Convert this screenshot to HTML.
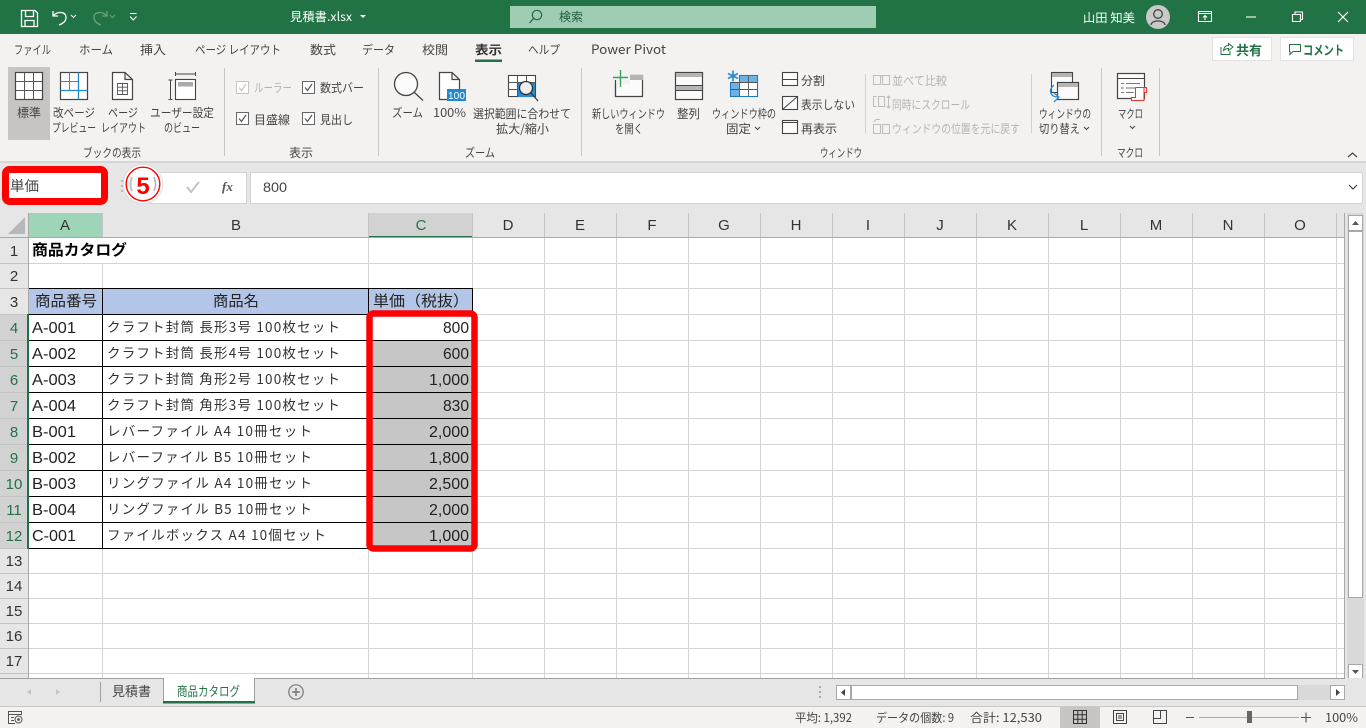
<!DOCTYPE html>
<html lang="ja"><head><meta charset="utf-8"><title>見積書.xlsx</title>
<style>
html,body{margin:0;padding:0;background:#e6e6e6;overflow:hidden}
svg{display:block}
text{font-family:"Liberation Sans","Noto Sans CJK JP",sans-serif;font-size:12px;fill:#444}
.w text,text.w{fill:#fff}
.d text{fill:#b4b4b4}
.cj text,text.cj{font-family:"Noto Sans CJK JP","Liberation Sans",sans-serif}
.c text{font-size:16px;fill:#222}
.n text{font-size:16px;fill:#222;text-anchor:end}
.h text{font-size:15px;fill:#333;text-anchor:middle}
.b text{font-family:"Noto Sans CJK JP","Liberation Sans",sans-serif;font-size:13.5px;fill:#333}
</style></head><body>
<svg width="1366" height="728" viewBox="0 0 1366 728" xmlns="http://www.w3.org/2000/svg">
<!-- title bar -->
<rect width="1366" height="34" fill="#217346"/>
<g fill="none" stroke="#fff" stroke-width="1.3">
<path d="M21.500 10.500H35L37.500 13V26.500H21.500Z"/><path d="M25.500 10.500V16.500H33.500V10.500M25 26.500V20.500H34V26.500"/>
<path d="M53 11V16H58M53.500 15.500C57 11.500 65.500 11 66 17C66.300 21 63 23.500 59 25"/>
<path d="M71 15L73.500 17.500L76 15" stroke-width="1"/>
<g stroke="#6a9f83"><path d="M107 11V16H102M106.500 15.500C103 11.500 94.500 11 94 17C93.700 21 97 23.500 101 25"/><path d="M110 15L112.500 17.500L115 15" stroke-width="1"/></g>
<path d="M130 13.500H136.500M130 16.500L133.250 20L136.500 16.500" stroke-width="1.100"/>
</g>
<text class="w cj" x="290" y="21" font-size="12" textLength="62" lengthAdjust="spacingAndGlyphs">見積書.xlsx</text>
<path d="M360 15H366L363 18Z" fill="#fff"/>
<rect x="510" y="6" width="366" height="22" fill="#9fcdb3"/>
<circle cx="537" cy="15" r="4.700" fill="none" stroke="#1f6b42" stroke-width="1.200"/><path d="M533.500 18.500L529.500 23" stroke="#1f6b42" stroke-width="1.300"/>
<text class="cj" x="559" y="21" style="fill:#1f5c3c" textLength="24" lengthAdjust="spacingAndGlyphs">検索</text>
<text class="w cj" x="1083" y="22" textLength="52" lengthAdjust="spacingAndGlyphs">山田 知美</text>
<circle cx="1158" cy="17" r="12" fill="#c9c9c9"/>
<circle cx="1158" cy="14" r="4.300" fill="none" stroke="#444" stroke-width="1.300"/><path d="M1151 25C1151.500 19.500 1164.500 19.500 1165 25" fill="none" stroke="#444" stroke-width="1.300"/>
<g fill="none" stroke="#fff" stroke-width="1.100">
<path d="M1198.500 11.500H1211.500V21.500H1198.500ZM1198.500 13.500H1211.500M1205 20V15.500M1203 17.500L1205 15.500L1207 17.500"/>
<path d="M1246 17H1256"/>
<path d="M1292.500 14.500H1300.500V21.500H1292.500ZM1295 14V12H1302.500V19.500H1300.500"/>
<path d="M1338 12L1348 22M1348 12L1338 22" stroke-width="1.200"/>
</g>
<!-- ribbon -->
<rect y="34" width="1366" height="128" fill="#f3f2f1"/>
<rect y="162" width="1366" height="51" fill="#e6e6e6"/>
<rect y="161" width="1366" height="2" fill="#d6d6d6"/>
<g class="cj">
<text x="14" y="54" textLength="37" lengthAdjust="spacingAndGlyphs">ファイル</text>
<text x="79" y="54" textLength="34" lengthAdjust="spacingAndGlyphs">ホーム</text>
<text x="140" y="54" textLength="26" lengthAdjust="spacingAndGlyphs">挿入</text>
<text x="195" y="54" textLength="86" lengthAdjust="spacingAndGlyphs">ページ レイアウト</text>
<text x="310" y="54" textLength="26" lengthAdjust="spacingAndGlyphs">数式</text>
<text x="362" y="54" textLength="33" lengthAdjust="spacingAndGlyphs">データ</text>
<text x="422" y="54" textLength="26" lengthAdjust="spacingAndGlyphs">校閲</text>
<text x="475" y="54" font-weight="700" style="fill:#333" textLength="27" lengthAdjust="spacingAndGlyphs">表示</text>
<text x="528" y="54" textLength="32" lengthAdjust="spacingAndGlyphs">ヘルプ</text>
<text x="591" y="54" style="font-size:13px" textLength="75" lengthAdjust="spacingAndGlyphs">Power Pivot</text>
</g>
<rect x="475" y="59.500" width="27" height="2.500" fill="#217346"/>
<!-- share / comment -->
<rect x="1212.500" y="37.500" width="59" height="23" fill="#fff" stroke="#e2e2e2"/>
<rect x="1280.500" y="37.500" width="73" height="23" fill="#fff" stroke="#e2e2e2"/>
<path d="M1221 47V54.500H1230V51M1223.500 50.500C1224 47 1226 45.500 1228.500 45.500V43.500L1233 47L1228.500 50.500V48.500C1226.500 48.500 1225 49.200 1223.500 50.500Z" fill="none" stroke="#217346" stroke-width="1"/>
<text class="cj" x="1236" y="55" font-weight="700" style="fill:#217346;font-size:13px" textLength="26" lengthAdjust="spacingAndGlyphs">共有</text>
<path d="M1289.500 44.500H1300.500V51.500H1293L1290 54.500V51.500H1289.500Z" fill="none" stroke="#217346" stroke-width="1"/>
<text class="cj" x="1303" y="55" font-weight="700" style="fill:#217346;font-size:13px" textLength="41" lengthAdjust="spacingAndGlyphs">コメント</text>
<!-- separators -->
<path d="M224.500 68V156M378.500 68V156M581.500 68V156M1101.500 68V156M1159.500 68V156" stroke="#c6c6c6"/>
<path d="M865.500 74V133M1031.500 74V133" stroke="#d0d0d0"/>
<!-- workbook views -->
<rect x="8" y="67" width="42" height="73" fill="#c6c5c3"/>
<rect x="15.500" y="72.500" width="27" height="27" fill="#fff" stroke="#444" stroke-width="1.200"/>
<path d="M24.500 72.500V99.500M33.500 72.500V99.500M15.500 81.500H42.500M15.500 90.500H42.500" stroke="#555" fill="none"/>
<rect x="60.500" y="72.500" width="27" height="27" fill="#fff" stroke="#444" stroke-width="1.200"/>
<path d="M69.500 72.500V90M60.500 81.500H78" stroke="#777" fill="none"/>
<path d="M78.500 72.500V99.500M60.500 90.500H87.500" stroke="#1e88d2" stroke-width="1.300" fill="none"/>
<path d="M112.500 72.500H125L132.500 79.500V99.500H112.500ZM125 72.500V79.500H132.500" fill="#fff" stroke="#444" stroke-width="1.200"/>
<path d="M117.500 83.500H127.500V94.500H117.500ZM117.500 87.200H127.500M117.500 90.800H127.500M122.500 83.500V94.500" fill="none" stroke="#555" stroke-width=".9"/>
<rect x="175.500" y="79.500" width="20" height="20" fill="#fff" stroke="#444" stroke-width="1.100"/>
<rect x="178" y="82" width="15" height="4.500" fill="#aaa"/>
<path d="M175.500 74H195.500M175.500 72V76M195.500 72V76M170.500 80V99.500M168.500 80H172.500M168.500 99.500H172.500" stroke="#444" fill="none"/>
<g class="cj">
<text x="17" y="117" textLength="24" lengthAdjust="spacingAndGlyphs">標準</text>
<text x="53" y="117" textLength="42" lengthAdjust="spacingAndGlyphs">改ページ</text>
<text x="52" y="132" textLength="44" lengthAdjust="spacingAndGlyphs">プレビュー</text>
<text x="108" y="117" textLength="30" lengthAdjust="spacingAndGlyphs">ページ</text>
<text x="101" y="132" textLength="45" lengthAdjust="spacingAndGlyphs">レイアウト</text>
<text x="150" y="117" textLength="64" lengthAdjust="spacingAndGlyphs">ユーザー設定</text>
<text x="164" y="132" textLength="36" lengthAdjust="spacingAndGlyphs">のビュー</text>
<text x="83" y="157" textLength="58" lengthAdjust="spacingAndGlyphs">ブックの表示</text>
<text x="289" y="157" textLength="24" lengthAdjust="spacingAndGlyphs">表示</text>
</g>
<!-- show -->
<g fill="#fff" stroke="#666">
<rect x="236.500" y="81.500" width="12" height="12" stroke="#c4c4c4"/>
<rect x="302.500" y="81.500" width="12" height="12"/>
<rect x="236.500" y="112.500" width="12" height="12"/>
<rect x="302.500" y="112.500" width="12" height="12"/>
</g>
<g fill="none" stroke="#555" stroke-width="1.200">
<path d="M239 87.500L241.500 90.500L246 84" stroke="#c4c4c4"/><path d="M305 87.500L307.500 90.500L312 84"/>
<path d="M239 118.500L241.500 121.500L246 115"/><path d="M305 118.500L307.500 121.500L312 115"/>
</g>
<g class="cj">
<text x="254" y="92" style="fill:#b4b4b4" textLength="38" lengthAdjust="spacingAndGlyphs">ルーラー</text>
<text x="320" y="92" textLength="44" lengthAdjust="spacingAndGlyphs">数式バー</text>
<text x="254" y="124" textLength="36" lengthAdjust="spacingAndGlyphs">目盛線</text>
<text x="320" y="124" textLength="33" lengthAdjust="spacingAndGlyphs">見出し</text>
</g>
<!-- zoom -->
<circle cx="406" cy="84" r="11.500" fill="#fbfbfb" stroke="#444" stroke-width="1.300"/><path d="M414.500 92.500L423 100.500" stroke="#444" stroke-width="1.300"/>
<path d="M439.500 72.500H452L459.500 79.500V99.500H439.500ZM452 72.500V79.500H459.500" fill="#fff" stroke="#444" stroke-width="1.200"/>
<rect x="447" y="89" width="19" height="12" fill="#1e88d2"/>
<text x="448" y="99" class="w" style="font-size:10px" textLength="17" lengthAdjust="spacingAndGlyphs">100</text>
<rect x="508.500" y="75.500" width="27" height="21" fill="#fff" stroke="#444" stroke-width="1.100"/>
<rect x="518" y="83" width="17" height="14" fill="#2a8ad4"/>
<path d="M517.500 75.500V96.500M526.500 75.500V83M508.500 82.500H535.500M508.500 89.500H518" stroke="#555" fill="none"/>
<circle cx="526" cy="88" r="6.500" fill="#eee" stroke="#333" stroke-width="1.300"/><path d="M531 93L538 101" stroke="#333" stroke-width="1.300"/>
<g class="cj">
<text x="392" y="117" textLength="31" lengthAdjust="spacingAndGlyphs">ズーム</text>
<text x="433" y="117" textLength="33" lengthAdjust="spacingAndGlyphs">100%</text>
<text x="473" y="118" textLength="98" lengthAdjust="spacingAndGlyphs">選択範囲に合わせて</text>
<text x="496" y="133" textLength="53" lengthAdjust="spacingAndGlyphs">拡大/縮小</text>
<text x="465" y="157" textLength="30" lengthAdjust="spacingAndGlyphs">ズーム</text>
</g>
<!-- window -->
<path d="M615.500 75.500H642.500V96.500H615.500Z" fill="#fbfbfb" stroke="#444" stroke-width="1.200"/>
<rect x="630" y="75" width="13" height="5" fill="#b4b4b4"/>
<rect x="612" y="72" width="18" height="12" fill="#f3f2f1"/>
<path d="M620.500 70V87M613 77.500H628" stroke="#3aa35c" stroke-width="1.400"/>
<path d="M615.500 80V96.500" stroke="#444" stroke-width="1.200"/>
<rect x="675.500" y="72.500" width="27" height="27" fill="#fbfbfb" stroke="#444" stroke-width="1.200"/>
<rect x="676" y="73" width="26" height="4" fill="#b4b4b4"/><rect x="676" y="86" width="26" height="4" fill="#b4b4b4"/>
<path d="M675.500 85.500H702.500M675.500 90.500H702.500" stroke="#444"/>
<rect x="730.500" y="75.500" width="27" height="21" fill="#fff" stroke="#1e78c0" stroke-width="1.100"/>
<path d="M739.500 75.500H757.500V82.500H739.500ZM730.500 82.500H739.500V96.500H730.500Z" fill="#6cb2e6"/>
<path d="M739.500 75.500V96.500M748.500 75.500V96.500M730.500 82.500H757.500M730.500 89.500H757.500" stroke="#555" fill="none" stroke-width=".9"/>
<path d="M730.500 75.500H757.500V96.500H730.500Z" stroke="#1e78c0" fill="none"/>
<rect x="727" y="70" width="12" height="12" fill="#f3f2f1"/>
<path d="M733 70.500V81.500M728 73.500L738 78.500M738 73.500L728 78.500" stroke="#2a8ad4" stroke-width="1.700"/>
<rect x="782.500" y="72.500" width="15" height="13" fill="#fbfbfb" stroke="#444" stroke-width="1.100"/><path d="M782.500 79.500H797.500" stroke="#444"/>
<rect x="782.500" y="96.500" width="15" height="13" fill="#fbfbfb" stroke="#444" stroke-width="1.100"/><path d="M782.500 109.500L797.500 96.500" stroke="#444"/>
<rect x="782.500" y="120.500" width="15" height="13" fill="#fbfbfb" stroke="#444" stroke-width="1.100"/><path d="M782.500 122.500H797.500" stroke="#444"/>
<g class="cj">
<text x="592" y="118" textLength="73" lengthAdjust="spacingAndGlyphs">新しいウィンドウ</text>
<text x="615" y="133" textLength="28" lengthAdjust="spacingAndGlyphs">を開く</text>
<text x="677" y="118" textLength="23" lengthAdjust="spacingAndGlyphs">整列</text>
<text x="712" y="118" textLength="64" lengthAdjust="spacingAndGlyphs">ウィンドウ枠の</text>
<text x="726" y="133" textLength="25" lengthAdjust="spacingAndGlyphs">固定</text>
<text x="801" y="85" textLength="24" lengthAdjust="spacingAndGlyphs">分割</text>
<text x="801" y="109" textLength="54" lengthAdjust="spacingAndGlyphs">表示しない</text>
<text x="801" y="133" textLength="36" lengthAdjust="spacingAndGlyphs">再表示</text>
<text x="820" y="157" textLength="42" lengthAdjust="spacingAndGlyphs">ウィンドウ</text>
</g>
<path d="M755 127L757.500 129.500L760 127" fill="none" stroke="#444"/>
<g fill="none" stroke="#bdbdbd">
<path d="M873.500 75.500H880.500V84.500H873.500ZM882.500 75.500H889.500V84.500H882.500ZM880.500 76L882.500 76"/>
<path d="M876.500 96.500H873.500V106.500H876.500M878.500 96.500H884.500V106.500H878.500ZM888.500 96V108M886.500 98L888.500 96L890.500 98M886.500 106L888.500 108L890.500 106"/>
<path d="M873.500 124.500H880.500V133.500H873.500ZM882.500 124.500H889.500V133.500H882.500ZM874 122L876 119.500H880"/>
</g>
<g class="cj">
<text x="892" y="85" style="fill:#b4b4b4" textLength="55" lengthAdjust="spacingAndGlyphs">並べて比較</text>
<text x="892" y="109" style="fill:#b4b4b4" textLength="78" lengthAdjust="spacingAndGlyphs">同時にスクロール</text>
<text x="892" y="133" style="fill:#b4b4b4" textLength="128" lengthAdjust="spacingAndGlyphs">ウィンドウの位置を元に戻す</text>
</g>
<rect x="1051.500" y="72.500" width="21" height="20" fill="#fbfbfb" stroke="#444" stroke-width="1.100"/>
<rect x="1052" y="73" width="20" height="4" fill="#b4b4b4"/>
<rect x="1057.500" y="82.500" width="21" height="17" fill="#fbfbfb" stroke="#444" stroke-width="1.200"/>
<rect x="1058" y="83" width="20" height="4" fill="#b4b4b4"/>
<path d="M1054 85C1048 90 1050 97 1058 97M1054 93L1059 97L1054 102" fill="none" stroke="#2a8ad4" stroke-width="1.300"/>
<rect x="1117.500" y="73.500" width="27" height="25" fill="#fbfbfb" stroke="#444" stroke-width="1.200"/>
<path d="M1117.500 78.500H1144.500" stroke="#444"/>
<path d="M1121 83.500H1124M1126 83.500H1140M1121 88H1124M1126 88H1136M1121 92.500H1124M1126 92.500H1134" stroke="#777" fill="none"/>
<path d="M1135.500 87.500H1146.500V92.500H1144V100.500H1131.500V98M1135.500 87.500V97.500H1131.500V100.500M1144 87.500V92.500" fill="#fff" stroke="#ee3333" stroke-width="1.100"/>
<g class="cj">
<text x="1039" y="118" textLength="52" lengthAdjust="spacingAndGlyphs">ウィンドウの</text>
<text x="1039" y="133" textLength="41" lengthAdjust="spacingAndGlyphs">切り替え</text>
<text x="1118" y="118" textLength="25" lengthAdjust="spacingAndGlyphs">マクロ</text>
<text x="1117" y="157" textLength="26" lengthAdjust="spacingAndGlyphs">マクロ</text>
</g>
<path d="M1084 127L1086.500 129.500L1089 127M1130 126L1132.500 128.500L1135 126" fill="none" stroke="#444"/>
<path d="M1348 157L1352.500 153L1357 157" fill="none" stroke="#444" stroke-width="1.200"/>
<!-- formula bar -->
<rect x="150.500" y="172.500" width="96" height="31" fill="#fff" stroke="#d4d4d4"/>
<rect x="250.500" y="172.500" width="1112" height="31" fill="#fff" stroke="#d4d4d4"/>
<path d="M187 187L191 192L199 182" fill="none" stroke="#c4c4c4" stroke-width="2"/>
<text x="222" y="191" font-style="italic" font-weight="700" style="font-family:'Liberation Serif',serif;font-size:13px;fill:#555">fx</text>
<text x="263" y="192" style="font-size:14px;fill:#444" textLength="24" lengthAdjust="spacingAndGlyphs">800</text>
<path d="M1349 185L1353 189L1357 185" fill="none" stroke="#444" stroke-width="1.200"/>
<path d="M122 180V182M122 185V187M122 190V192" stroke="#aaa" stroke-width="1.500"/>
<rect x="5.500" y="169.500" width="99" height="32" rx="4" fill="#fff" stroke="#f00" stroke-width="7"/>
<text class="cj" x="10" y="191" style="font-size:14px;fill:#444" textLength="29" lengthAdjust="spacingAndGlyphs">単価</text>
<circle cx="143" cy="184" r="20.500" fill="#d8d8d8" opacity=".6"/>
<circle cx="143" cy="184" r="19.200" fill="#fff"/>
<circle cx="143" cy="184" r="16.800" fill="#fff" stroke="#f00" stroke-width="1.400"/>
<path d="M132 177C130 182 130 187 132 191M154 177C156 182 156 187 154 191" fill="none" stroke="#bbb" stroke-width="1.800"/>
<text x="143" y="194" text-anchor="middle" font-weight="700" style="font-size:24px;fill:#f00">5</text>
<!-- sheet -->
<rect x="29" y="238" width="1315" height="440" fill="#fff"/>
<rect y="213" width="1345" height="25" fill="#e6e6e6"/>
<rect y="238" width="28" height="440" fill="#e6e6e6"/>
<rect x="29" y="213" width="73" height="24" fill="#9fd5b7"/>
<rect x="369" y="213" width="103" height="23" fill="#d2d2d2"/>
<rect x="369" y="236" width="104" height="2" fill="#217346"/>
<rect y="315" width="27" height="233" fill="#d2d2d2"/>
<path d="M25 217V234H8Z" fill="#b8b8b8"/>
<path d="M102.500 213V237M368.500 213V237M472.500 213V237M544.500 213V237M616.500 213V237M688.500 213V237M760.500 213V237M832.500 213V237M904.500 213V237M976.500 213V237M1048.500 213V237M1120.500 213V237M1192.500 213V237M1264.500 213V237M1336.500 213V237" stroke="#c4c4c4"/>
<path d="M0 237.500H1344M28.500 213V678" stroke="#a8a8a8"/>
<path d="M0 263.500H28M0 288.500H28M0 314.500H28M0 340.500H28M0 366.500H28M0 392.500H28M0 418.500H28M0 444.500H28M0 470.500H28M0 496.500H28M0 522.500H28M0 548.500H28M0 573.500H28M0 598.500H28M0 623.500H28M0 648.500H28M0 673.500H28" stroke="#c4c4c4"/>
<rect x="369" y="341" width="103" height="207" fill="#c6c6c6"/>
<path stroke="#d4d4d4" fill="none" d="M102.500 264V678M368.500 238V678M472.500 238V678M544.500 238V678M616.500 238V678M688.500 238V678M760.500 238V678M832.500 238V678M904.500 238V678M976.500 238V678M1048.500 238V678M1120.500 238V678M1192.500 238V678M1264.500 238V678M1336.500 238V678M29 263.500H1344M29 288.500H1344M473 314.500H1344M473 340.500H1344M473 366.500H1344M473 392.500H1344M473 418.500H1344M473 444.500H1344M473 470.500H1344M473 496.500H1344M473 522.500H1344M29 548.500H1344M29 573.500H1344M29 598.500H1344M29 623.500H1344M29 648.500H1344M29 673.500H1344"/>
<rect x="29" y="289" width="444" height="25" fill="#b4c6e7"/>
<path stroke="#000" fill="none" d="M29 288.500H473M29 314.500H473M29 340.500H473M29 366.500H473M29 392.500H473M29 418.500H473M29 444.500H473M29 470.500H473M29 496.500H473M29 522.500H473M29 548.500H473M102.500 288V549M368.500 288V549M472.500 288V549"/>
<rect x="27" y="314" width="2" height="235" fill="#217346"/>
<g class="h">
<text x="65" y="230">A</text><text x="236" y="230">B</text><text x="421" y="230" style="fill:#217346">C</text><text x="508" y="230">D</text><text x="580" y="230">E</text><text x="652" y="230">F</text><text x="724" y="230">G</text><text x="796" y="230">H</text><text x="868" y="230">I</text><text x="940" y="230">J</text><text x="1012" y="230">K</text><text x="1084" y="230">L</text><text x="1156" y="230">M</text><text x="1228" y="230">N</text><text x="1300" y="230">O</text>
<text x="14" y="256">1</text><text x="14" y="281">2</text><text x="14" y="307">3</text>
<text x="14" y="333" style="fill:#217346">4</text><text x="14" y="359" style="fill:#217346">5</text><text x="14" y="385" style="fill:#217346">6</text><text x="14" y="411" style="fill:#217346">7</text><text x="14" y="437" style="fill:#217346">8</text><text x="14" y="463" style="fill:#217346">9</text><text x="14" y="489" style="fill:#217346">10</text><text x="14" y="515" style="fill:#217346">11</text><text x="14" y="541" style="fill:#217346">12</text>
<text x="14" y="566">13</text><text x="14" y="591">14</text><text x="14" y="616">15</text><text x="14" y="641">16</text><text x="14" y="666">17</text>
</g>
<g class="c cj">
<text x="32" y="255" font-weight="700" style="font-size:15px;fill:#000" textLength="95" lengthAdjust="spacingAndGlyphs">商品カタログ</text>
<text x="35" y="306" style="font-size:15px" textLength="62" lengthAdjust="spacingAndGlyphs">商品番号</text>
<text x="213" y="306" style="font-size:15px" textLength="46" lengthAdjust="spacingAndGlyphs">商品名</text>
<text x="373" y="306" style="font-size:15px" textLength="96" lengthAdjust="spacingAndGlyphs">単価（税抜）</text>
</g>
<g class="c">
<text x="32" y="333" textLength="44" lengthAdjust="spacingAndGlyphs">A-001</text>
<text x="32" y="359" textLength="44" lengthAdjust="spacingAndGlyphs">A-002</text>
<text x="32" y="385" textLength="44" lengthAdjust="spacingAndGlyphs">A-003</text>
<text x="32" y="411" textLength="44" lengthAdjust="spacingAndGlyphs">A-004</text>
<text x="32" y="437" textLength="44" lengthAdjust="spacingAndGlyphs">B-001</text>
<text x="32" y="463" textLength="44" lengthAdjust="spacingAndGlyphs">B-002</text>
<text x="32" y="489" textLength="44" lengthAdjust="spacingAndGlyphs">B-003</text>
<text x="32" y="515" textLength="44" lengthAdjust="spacingAndGlyphs">B-004</text>
<text x="32" y="541" textLength="44" lengthAdjust="spacingAndGlyphs">C-001</text>
</g>
<g class="b">
<text x="107" y="332" textLength="233" lengthAdjust="spacing">クラフト封筒 長形3号 100枚セット</text>
<text x="107" y="358" textLength="233" lengthAdjust="spacing">クラフト封筒 長形4号 100枚セット</text>
<text x="107" y="384" textLength="233" lengthAdjust="spacing">クラフト封筒 角形2号 100枚セット</text>
<text x="107" y="410" textLength="233" lengthAdjust="spacing">クラフト封筒 角形3号 100枚セット</text>
<text x="107" y="436" textLength="205" lengthAdjust="spacing">レバーファイル A4 10冊セット</text>
<text x="107" y="462" textLength="205" lengthAdjust="spacing">レバーファイル B5 10冊セット</text>
<text x="107" y="488" textLength="205" lengthAdjust="spacing">リングファイル A4 10冊セット</text>
<text x="107" y="514" textLength="205" lengthAdjust="spacing">リングファイル B5 10冊セット</text>
<text x="107" y="540" textLength="219" lengthAdjust="spacing">ファイルボックス A4 10個セット</text>
</g>
<g class="n">
<text x="469" y="333" textLength="26" lengthAdjust="spacingAndGlyphs">800</text>
<text x="469" y="359" textLength="26" lengthAdjust="spacingAndGlyphs">600</text>
<text x="469" y="385" textLength="40" lengthAdjust="spacingAndGlyphs">1,000</text>
<text x="469" y="411" textLength="26" lengthAdjust="spacingAndGlyphs">830</text>
<text x="469" y="437" textLength="40" lengthAdjust="spacingAndGlyphs">2,000</text>
<text x="469" y="463" textLength="40" lengthAdjust="spacingAndGlyphs">1,800</text>
<text x="469" y="489" textLength="40" lengthAdjust="spacingAndGlyphs">2,500</text>
<text x="469" y="515" textLength="40" lengthAdjust="spacingAndGlyphs">2,000</text>
<text x="469" y="541" textLength="40" lengthAdjust="spacingAndGlyphs">1,000</text>
</g>
<rect x="369.500" y="313.500" width="105" height="235" rx="4" fill="none" stroke="#f00" stroke-width="6.500"/>
<!-- right scrollbar -->
<path d="M1344.500 213V678" stroke="#a8a8a8"/>
<rect x="1347" y="213" width="17" height="465" fill="#d9d9d9"/>
<rect x="1348.500" y="215.500" width="14" height="15" fill="#fff" stroke="#a8a8a8"/><path d="M1352 225L1355.500 221L1359 225Z" fill="#555"/>
<rect x="1348.500" y="231.500" width="14" height="366" fill="#fff" stroke="#a8a8a8"/>
<rect x="1348.500" y="664.500" width="14" height="14" fill="#fff" stroke="#a8a8a8"/><path d="M1352 670H1359L1355.500 674Z" fill="#555"/>
<!-- tabs -->
<rect y="678" width="1366" height="28" fill="#e6e6e6"/>
<path d="M0 678.500H1345" stroke="#a0a0a0"/>
<path d="M31 689V695L27 692ZM56 689V695L60 692Z" fill="#c6c6c6"/>
<path d="M100.500 682V702" stroke="#a0a0a0"/>
<text class="cj" x="112" y="696" style="font-size:13px" textLength="39" lengthAdjust="spacingAndGlyphs">見積書</text>
<path d="M163.500 679V702M254.500 679V702" stroke="#a0a0a0"/>
<rect x="164" y="678" width="90" height="24" fill="#fff"/>
<rect x="163" y="701" width="92" height="2.500" fill="#217346"/>
<text class="cj" x="177" y="696" style="fill:#217346;font-size:13px" textLength="63" lengthAdjust="spacingAndGlyphs">商品カタログ</text>
<circle cx="296" cy="692" r="7.200" fill="none" stroke="#777" stroke-width="1.200"/><path d="M296 688V696M292 692H300" stroke="#777" stroke-width="1.500"/>
<path d="M820 686V688M820 691V693M820 696V698" stroke="#aaa" stroke-width="2"/>
<rect x="836" y="685" width="509" height="15" fill="#d9d9d9"/>
<rect x="836.500" y="685.500" width="14" height="14" fill="#fff" stroke="#a8a8a8"/><path d="M845 689V696L841 692.500Z" fill="#444"/>
<rect x="851.500" y="685.500" width="446" height="14" fill="#fff" stroke="#a8a8a8"/>
<rect x="1330.500" y="685.500" width="14" height="14" fill="#fff" stroke="#a8a8a8"/><path d="M1336 689V696L1340 692.500Z" fill="#444"/>
<!-- status -->
<rect y="706" width="1366" height="22" fill="#f3f2f1"/>
<path d="M0 706.500H1366" stroke="#c8c8c8"/>
<path d="M8.500 711.500H21.500V714.500H8.500ZM8.500 714.500V723.500H15M11 717.500H14M11 720.500H14" fill="none" stroke="#555"/><circle cx="18.500" cy="719.500" r="3.500" fill="none" stroke="#555"/><circle cx="18.500" cy="719.500" r="1.400" fill="#555"/>
<g class="cj">
<text x="795" y="722" textLength="57" lengthAdjust="spacingAndGlyphs">平均: 1,392</text>
<text x="876" y="722" textLength="78" lengthAdjust="spacingAndGlyphs">データの個数: 9</text>
<text x="970" y="722" textLength="72" lengthAdjust="spacingAndGlyphs">合計: 12,530</text>
<text x="1325" y="722" textLength="33" lengthAdjust="spacingAndGlyphs">100%</text>
</g>
<rect x="1060" y="707" width="40" height="21" fill="#c6c5c3"/>
<path d="M1073.500 710.500H1086.500V723.500H1073.500ZM1077.800 710.500V723.500M1082.200 710.500V723.500M1073.500 714.800H1086.500M1073.500 719.200H1086.500" fill="none" stroke="#333"/>
<path d="M1113.500 710.500H1126.500V723.500H1113.500ZM1116.500 713.500H1123.500V720.500H1116.500ZM1118 716H1122M1118 718H1122" fill="none" stroke="#444"/>
<path d="M1153.500 710.500H1166.500V723.500H1153.500V710.500M1153.500 718.500H1160.500V710.500" fill="none" stroke="#444"/>
<path d="M1186 717.500H1194M1301 717.500H1311M1306 712.500V722.500" stroke="#555" stroke-width="1.100"/>
<path d="M1199 717.500H1299" stroke="#aaa"/>
<rect x="1247" y="711" width="5" height="12" fill="#666"/>
</svg>
</body></html>
